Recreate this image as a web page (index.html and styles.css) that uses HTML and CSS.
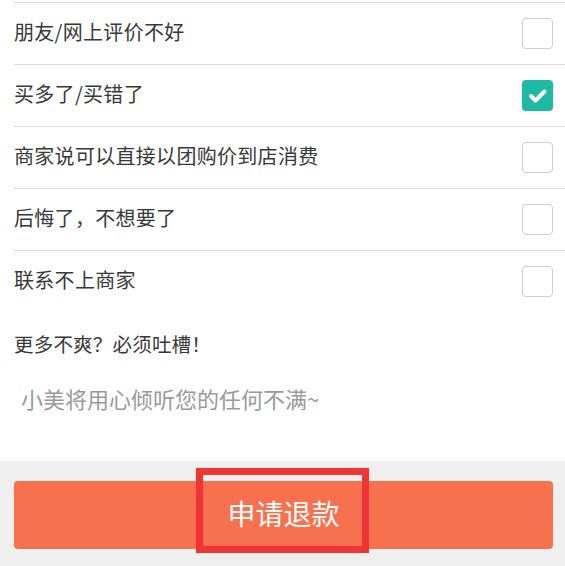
FILE: index.html
```html
<!DOCTYPE html>
<html lang="zh-CN">
<head>
<meta charset="utf-8">
<title>申请退款</title>
<link rel="stylesheet" href="styles.css">
</head>
<body>
<div class="page">
  <ul class="reasons">
    <li class="reason"><span class="label">朋友/网上评价不好</span><span class="box"></span></li>
    <li class="reason"><span class="label">买多了/买错了</span><span class="box checked"><svg viewBox="0 0 31 31" width="31" height="31"><path d="M9 16 L13.5 20.5 L22.5 11.5" fill="none" stroke="#fff" stroke-width="4" stroke-linecap="round" stroke-linejoin="round"/></svg></span></li>
    <li class="reason"><span class="label">商家说可以直接以团购价到店消费</span><span class="box"></span></li>
    <li class="reason"><span class="label">后悔了，不想要了</span><span class="box"></span></li>
    <li class="reason"><span class="label">联系不上商家</span><span class="box"></span></li>
  </ul>
  <div class="comment">
    <div class="comment-title">更多不爽？必须吐槽！</div>
    <div class="comment-input">小美将用心倾听您的任何不满~</div>
  </div>
  <div class="footer">
    <button class="submit">申请退款</button>
    <div class="highlight"></div>
  </div>
</div>
</body>
</html>
```

FILE: styles.css
```css
* { box-sizing: border-box; }
html, body {
  margin: 0;
  padding: 0;
  background: #fff;
}
body {
  font-family: "Noto Sans CJK SC", "Noto Sans", sans-serif;
  color: #333;
}
.page {
  width: 565px;
  height: 566px;
  overflow: hidden;
  display: flex;
  flex-direction: column;
}
.reasons {
  list-style: none;
  margin: 0;
  padding: 2px 0 0 14px;
}
.reason {
  height: 62px;
  border-top: 1px solid #dcdcdc;
  display: flex;
  align-items: center;
  justify-content: space-between;
  padding-right: 12px;
}
.label {
  font-size: 20px;
  line-height: 30px;
  letter-spacing: 0.3px;
  padding-bottom: 4px;
  color: #383838;
}
.box {
  width: 31px;
  height: 31px;
  border: 1px solid #cfcfcf;
  border-radius: 4px;
  background: #fff;
  display: flex;
}
.box.checked {
  border: none;
  background: #1db9a0;
}
.comment {
  padding: 17px 14px 0 14px;
  height: 149px;
}
.comment-title {
  font-size: 19.5px;
  line-height: 30px;
  letter-spacing: 0.2px;
  color: #383838;
}
.comment-input {
  margin-top: 24px;
  padding-left: 7px;
  font-size: 22px;
  line-height: 30px;
  color: #9a9a9a;
}
.footer {
  position: relative;
  flex: 1;
  background: #efefef;
  padding: 20px 12px 0 14px;
}
.submit {
  display: block;
  width: 100%;
  height: 68px;
  border: none;
  border-radius: 4px;
  background: #f8714f;
  color: #fff;
  font-family: "Noto Sans CJK SC", "Noto Sans", sans-serif;
  font-size: 28px;
  padding: 0 0 5px 0;
}
.highlight {
  position: absolute;
  left: 196px;
  top: 7px;
  width: 173px;
  height: 85px;
  border: 7px solid #ef3434;
  pointer-events: none;
}
```
